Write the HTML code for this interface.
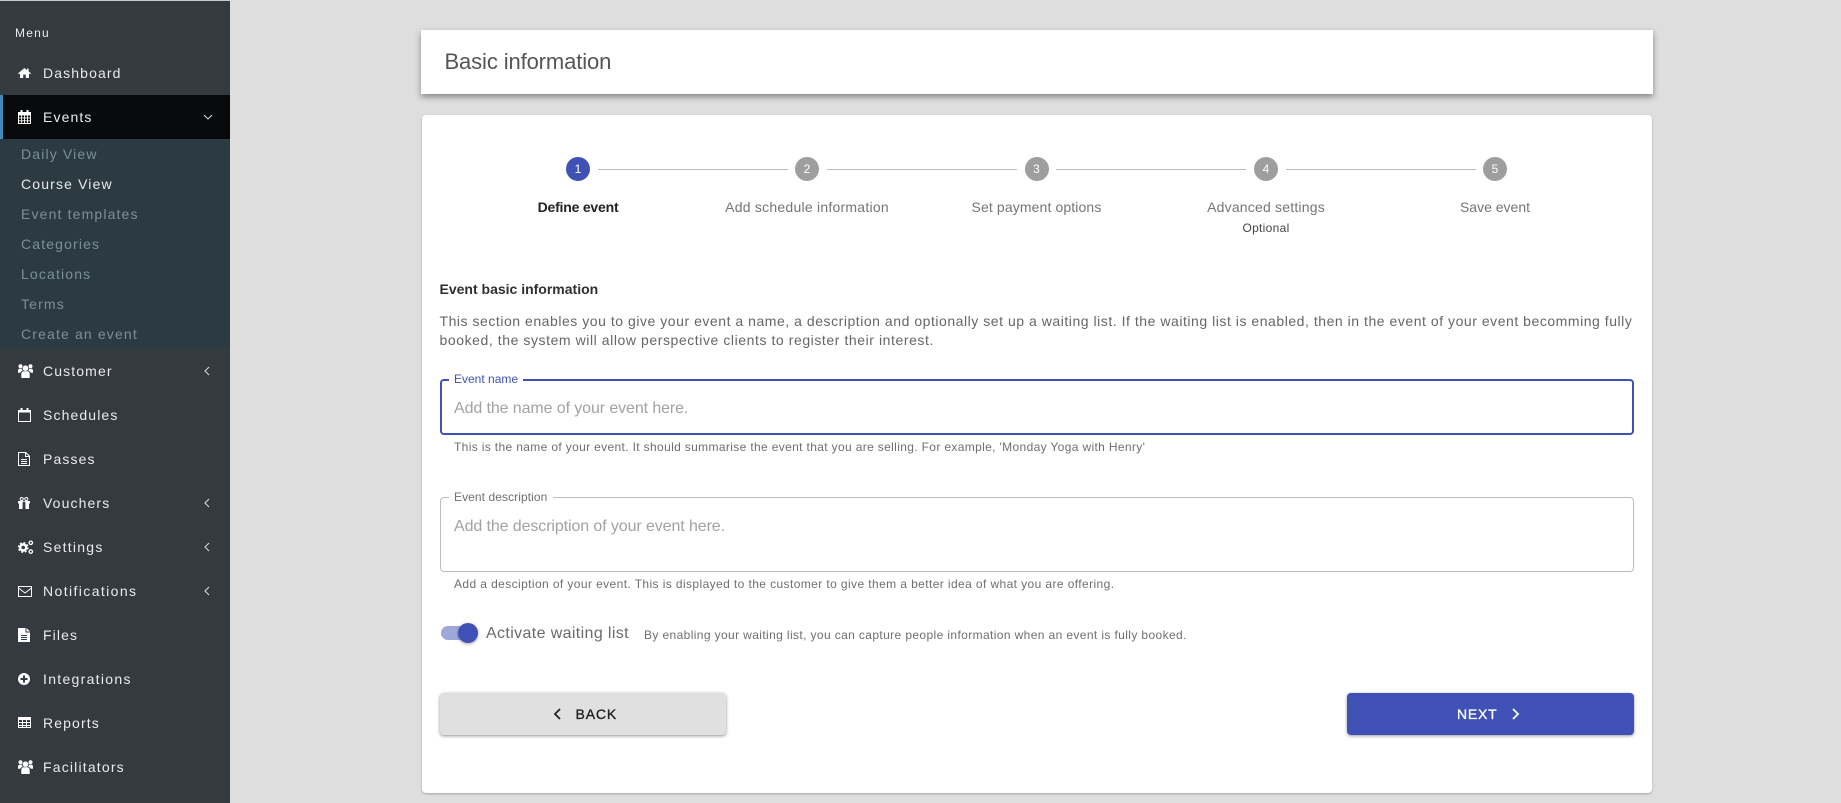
<!DOCTYPE html>
<html><head><meta charset="utf-8"><style>
html,body{margin:0;padding:0;width:1841px;height:803px;overflow:hidden;background:#dedede;font-family:"Liberation Sans",sans-serif}
div,span{position:absolute;white-space:nowrap}
#side{left:0;top:0;width:230px;height:803px;background:#353940;border-top:1px solid #c8c8c8;box-sizing:border-box}
.t{color:#e9ebec;font-size:14px;letter-spacing:1.12px;line-height:20px;left:43px}
.s{color:#7a9099;font-size:14px;letter-spacing:1.15px;line-height:20px;left:21px}
.ic{position:absolute;left:18px;width:16px;height:16px;fill:#fff}
.ch{position:absolute;left:201px;width:12px;height:12px;fill:none;stroke:#d5d7d9;stroke-width:1.1}
.m{color:#666;font-size:14px;letter-spacing:.535px;line-height:20px}
.c{width:24px;height:24px;border-radius:50%;background:#9e9e9e;color:#fff;font-size:12px;line-height:24px;text-align:center;top:157px}
.l{height:1px;background:#bdbdbd;top:169px;width:190px}
.st{top:197px;font-size:14px;line-height:20px;color:#757575;transform:translateX(-50%);letter-spacing:.24px}
.h{font-size:12px;line-height:16px;color:#6f6f6f;letter-spacing:.38px;left:454px}
.ph{font-size:16px;color:#a2a2a2;left:454px;line-height:20px;letter-spacing:-.1px}
</style></head><body>
<div id="side"></div>
<div style="left:0;top:95px;width:230px;height:44px;background:#08090b"></div>
<div style="left:0;top:95px;width:3px;height:44px;background:#3c8dbc"></div>
<div style="left:0;top:139px;width:230px;height:210px;background:#2c3b41"></div>

<div class="t" style="left:15px;top:23px;font-size:12px;line-height:20px;letter-spacing:1.2px">Menu</div>
<div class="t" style="top:63px">Dashboard</div>
<div class="t" style="top:107px">Events</div>
<div class="s" style="top:144px">Daily View</div>
<div class="s" style="top:174px;color:#e9ebec">Course View</div>
<div class="s" style="top:204px">Event templates</div>
<div class="s" style="top:234px">Categories</div>
<div class="s" style="top:264px">Locations</div>
<div class="s" style="top:294px">Terms</div>
<div class="s" style="top:324px">Create an event</div>
<div class="t" style="top:361px">Customer</div>
<div class="t" style="top:405px">Schedules</div>
<div class="t" style="top:449px">Passes</div>
<div class="t" style="top:493px">Vouchers</div>
<div class="t" style="top:537px;letter-spacing:1.25px">Settings</div>
<div class="t" style="top:581px;letter-spacing:1.4px">Notifications</div>
<div class="t" style="top:625px">Files</div>
<div class="t" style="top:669px;letter-spacing:1.3px">Integrations</div>
<div class="t" style="top:713px">Reports</div>
<div class="t" style="top:757px;letter-spacing:1.18px">Facilitators</div>

<!-- sidebar icons -->
<svg class="ic" style="top:65px" viewBox="0 0 16 16"><path d="M6.500 3 0 8.400l.7.9L2 8.300V13h3.200V9.600h2.600V13H11V8.300l1.300 1 .7-.9-2.400-2V3.600H9v1.600z"/></svg>
<svg class="ic" style="top:109px" viewBox="0 0 16 16"><path fill-rule="evenodd" d="M0 3h2.500V1h2v2h4V1h2v2H13v12H0zM1 6.500v2h2.200v-2zm3 0v2h2.100v-2zm3 0v2h2.100v-2zm3 0v2h2v-2zM1 9.400v2h2.200v-2zm3 0v2h2.100v-2zm3 0v2h2.100v-2zm3 0v2h2v-2zM1 12.200V14h2.200v-1.800zm3 0V14h2.100v-1.800zm3 0V14h2.100v-1.800zm3 0V14h2v-1.800z"/></svg>
<svg class="ic" style="top:363px" viewBox="0 0 16 16"><circle cx="7.500" cy="5.200" r="2.800"/><circle cx="2.500" cy="3.200" r="2"/><circle cx="12.500" cy="3.200" r="2"/><path d="M3.300 15v-3.800c0-1.800 1-3 2.200-3h4c1.200 0 2.200 1.200 2.200 3V15zM0 9.800V7.500c0-1 .8-1.800 1.600-1.800h2.300c.1 1 .5 1.700 1 2.100-1.500.4-2.400 1-2.600 2zM15 9.800V7.500c0-1-.8-1.800-1.600-1.800h-2.300c-.1 1-.5 1.700-1 2.100 1.500.4 2.400 1 2.600 2z"/></svg>
<svg class="ic" style="top:407px" viewBox="0 0 16 16"><path fill-rule="evenodd" d="M0 3h2.500V1h2v2h4V1h2v2H13v12H0zM1 5.500V14h11V5.500z"/></svg>
<svg class="ic" style="top:451px" viewBox="0 0 16 16"><path fill-rule="evenodd" d="M0 1h8l4 4v10H0zM1 2v12h10V6H7V2zm7 .500V5h2.500zM3 8h6v1H3zm0 2h6v1H3zm0 2h6v1H3z"/></svg>
<svg class="ic" style="top:495px" viewBox="0 0 16 16"><path d="M0 6h12v2.500h-1V14H7.400V6.800H4.600V14H1V8.500H0z"/><circle cx="3.700" cy="4" r="1.500" fill="none" stroke="#fff"/><circle cx="8.300" cy="4" r="1.500" fill="none" stroke="#fff"/></svg>
<svg class="ic" style="top:539px" viewBox="0 0 16 16"><circle cx="5.200" cy="8.500" r="3" fill="none" stroke="#fff" stroke-width="2.400"/><circle cx="5.200" cy="8.500" r="4.700" fill="none" stroke="#fff" stroke-width="1.400" stroke-dasharray="2 1.700"/><circle cx="12.800" cy="3.800" r="1.700" fill="none" stroke="#fff" stroke-width="1.300"/><circle cx="12.800" cy="12.600" r="1.700" fill="none" stroke="#fff" stroke-width="1.300"/></svg>
<svg class="ic" style="top:583px" viewBox="0 0 16 16"><path fill="none" stroke="#fff" stroke-width="1" d="M.5 3.500h13v10H.5zM.5 5 7 10l6.500-5"/></svg>
<svg class="ic" style="top:627px" viewBox="0 0 16 16"><path fill-rule="evenodd" d="M0 1h7.500v4.500H12V15H0zM8.500 1 12 4.500H8.500zM3 8v1h6V8zm0 2v1h6v-1zm0 2v1h6v-1z"/></svg>
<svg class="ic" style="top:671px" viewBox="0 0 16 16"><path fill-rule="evenodd" d="M6 2a6 6 0 1 1 0 12A6 6 0 0 1 6 2zM5 4.500V7H2.500v2H5v2.500h2V9h2.500V7H7V4.500z"/></svg>
<svg class="ic" style="top:715px" viewBox="0 0 16 16"><path fill-rule="evenodd" d="M0 2h13v11H0zM1 5v2h3v-2zm4 0v2h3v-2zm4 0v2h3v-2zM1 8v2h3V8zm4 0v2h3V8zm4 0v2h3V8zM1 11v1h3v-1zm4 0v1h3v-1zm4 0v1h3v-1z"/></svg>
<svg class="ic" style="top:759px" viewBox="0 0 16 16"><circle cx="7.500" cy="5.200" r="2.800"/><circle cx="2.500" cy="3.200" r="2"/><circle cx="12.500" cy="3.200" r="2"/><path d="M3.300 15v-3.800c0-1.800 1-3 2.200-3h4c1.200 0 2.200 1.200 2.200 3V15zM0 9.800V7.500c0-1 .8-1.800 1.600-1.800h2.300c.1 1 .5 1.700 1 2.100-1.500.4-2.400 1-2.600 2zM15 9.800V7.500c0-1-.8-1.800-1.600-1.800h-2.300c-.1 1-.5 1.700-1 2.100 1.500.4 2.400 1 2.600 2z"/></svg>

<svg class="ch" style="top:111px" viewBox="0 0 12 12"><path d="M3 4l4 4 4-4"/></svg>
<svg class="ch" style="top:365px" viewBox="0 0 12 12"><path d="M8 2 4 6l4 4"/></svg>
<svg class="ch" style="top:497px" viewBox="0 0 12 12"><path d="M8 2 4 6l4 4"/></svg>
<svg class="ch" style="top:541px" viewBox="0 0 12 12"><path d="M8 2 4 6l4 4"/></svg>
<svg class="ch" style="top:585px" viewBox="0 0 12 12"><path d="M8 2 4 6l4 4"/></svg>

<!-- header card -->
<div style="left:421px;top:30px;width:1232px;height:64px;background:#fff;box-shadow:0 3px 6px rgba(0,0,0,.4)"></div>
<div style="left:444.500px;top:48px;font-size:22px;line-height:28px;color:#555;letter-spacing:-.12px">Basic information</div>

<!-- main card -->
<div style="left:422px;top:115px;width:1230px;height:678px;background:#fff;border-radius:4px;box-shadow:0 1px 2px rgba(0,0,0,.25)"></div>

<!-- stepper -->
<div class="c" style="left:566px;background:#3f51b5">1</div>
<div class="c" style="left:795px">2</div>
<div class="c" style="left:1024.500px">3</div>
<div class="c" style="left:1254px">4</div>
<div class="c" style="left:1483px">5</div>
<div class="l" style="left:598px"></div>
<div class="l" style="left:827px"></div>
<div class="l" style="left:1056px"></div>
<div class="l" style="left:1286px"></div>
<div class="st" style="left:578px;color:#222;font-weight:700;letter-spacing:-.2px">Define event</div>
<div class="st" style="left:807px">Add schedule information</div>
<div class="st" style="left:1036.500px;letter-spacing:.12px">Set payment options</div>
<div class="st" style="left:1266px;letter-spacing:.2px">Advanced settings</div>
<div class="st" style="left:1495px;letter-spacing:0">Save event</div>
<div class="st" style="left:1266px;top:220px;font-size:12px;line-height:16px;color:#444;letter-spacing:.3px">Optional</div>

<!-- text -->
<div style="left:439.500px;top:279px;font-size:14px;line-height:20px;font-weight:700;color:#2f2f2f;letter-spacing:0">Event basic information</div>
<div class="m" style="left:439.500px;top:311px">This section enables you to give your event a name, a description and optionally set up a waiting list. If the waiting list is enabled, then in the event of your event becomming fully</div>
<div class="m" style="left:439.500px;top:330px;letter-spacing:.57px">booked, the system will allow perspective clients to register their interest.</div>

<!-- event name -->
<div style="left:440px;top:379px;width:1194px;height:56px;border:2px solid #3f51b5;border-radius:4px;box-sizing:border-box"></div>
<div style="left:449px;top:376px;width:74px;height:6px;background:#fff"></div>
<div style="left:454px;top:371px;font-size:12px;line-height:16px;color:#3f51b5;letter-spacing:0">Event name</div>
<div class="ph" style="top:399px">Add the name of your event here.</div>
<div class="h" style="top:439px;letter-spacing:.35px">This is the name of your event. It should summarise the event that you are selling. For example, 'Monday Yoga with Henry'</div>

<!-- description -->
<div style="left:440px;top:497px;width:1194px;height:75px;border:1px solid #bdbdbd;border-radius:4px;box-sizing:border-box"></div>
<div style="left:449px;top:494px;width:104px;height:6px;background:#fff"></div>
<div style="left:454px;top:489px;font-size:12px;line-height:16px;color:#6f6f6f;letter-spacing:.08px">Event description</div>
<div class="ph" style="top:517px">Add the description of your event here.</div>
<div class="h" style="top:576px;letter-spacing:.4px">Add a desciption of your event. This is displayed to the customer to give them a better idea of what you are offering.</div>

<!-- switch -->
<div style="left:441px;top:626px;width:34px;height:14px;border-radius:7px;background:#9fa8da"></div>
<div style="left:458px;top:623px;width:20px;height:20px;border-radius:50%;background:#3f51b5;box-shadow:0 1px 3px rgba(0,0,0,.35)"></div>
<div style="left:486px;top:624px;font-size:16px;line-height:20px;color:#6a6a6a;letter-spacing:.37px">Activate waiting list</div>
<div class="h" style="left:644px;top:627px">By enabling your waiting list, you can capture people information when an event is fully booked.</div>

<!-- buttons -->
<div style="left:440px;top:693px;width:286px;height:42px;background:#e0e0e0;border-radius:4px;box-shadow:0 1px 3px rgba(0,0,0,.45)"></div>
<svg style="position:absolute;left:551px;top:707px" width="12" height="14" viewBox="0 0 12 14"><path d="M9 2 4 7l5 5" fill="none" stroke="#222" stroke-width="1.800"/></svg>
<div style="left:575.500px;top:704px;font-size:14px;line-height:20px;color:#1f1f1f;letter-spacing:.85px;-webkit-text-stroke:.35px #1f1f1f">BACK</div>
<div style="left:1347px;top:693px;width:287px;height:42px;background:#3f51b5;border-radius:4px;box-shadow:0 1px 3px rgba(0,0,0,.4)"></div>
<div style="left:1457px;top:704px;font-size:14px;line-height:20px;color:#fff;letter-spacing:.8px;-webkit-text-stroke:.35px #fff">NEXT</div>
<svg style="position:absolute;left:1510px;top:707px" width="12" height="14" viewBox="0 0 12 14"><path d="M3 2l5 5-5 5" fill="none" stroke="#fff" stroke-width="1.800"/></svg>
</body></html>
